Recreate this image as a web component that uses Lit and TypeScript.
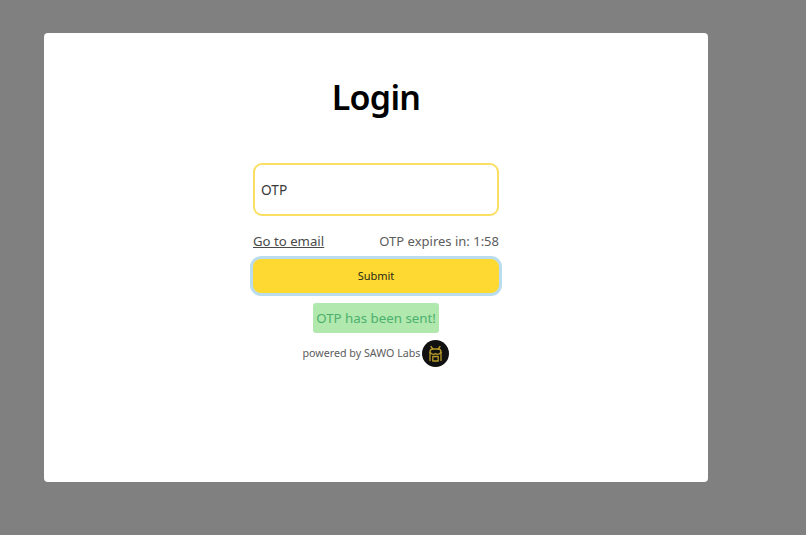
import { LitElement, html, css } from "lit";
import { customElement } from "lit/decorators.js";

@customElement("app-root")
export class AppRoot extends LitElement {
  static styles = css`
    :host {
      display: block;
      width: 806px;
      height: 535px;
      background: #808080;
      overflow: hidden;
      font-family: "Noto Sans", "Open Sans", sans-serif;
      padding: 33px 98px 53px 44px;
      box-sizing: border-box;
    }
    .card {
      background: #fff;
      border-radius: 4px;
      height: 449px;
      display: flex;
      flex-direction: column;
      align-items: center;
      box-sizing: border-box;
      padding-top: 40px;
    }
    h1 {
      margin: 0;
      font-size: 34px;
      line-height: 48px;
      font-weight: 600;
      letter-spacing: -0.7px;
      color: #000;
    }
    .form {
      width: 246px;
      margin-top: 42px;
      display: flex;
      flex-direction: column;
      align-items: center;
    }
    .input {
      width: 100%;
      height: 53px;
      box-sizing: border-box;
      border: 2.75px solid #fbdf62;
      border-radius: 9px;
      display: flex;
      align-items: center;
      padding-left: 6px;
      font-size: 13.7px;
      color: #3a3a3a;
    }
    .meta {
      width: 100%;
      display: flex;
      justify-content: space-between;
      align-items: center;
      margin-top: 15px;
      height: 20px;
      font-size: 13px;
      line-height: 20px;
      color: #5c5c5c;
    }
    .meta a {
      color: #4a4a4a;
      font-size: 13.2px;
      text-decoration: underline;
    }
    .submit {
      width: 100%;
      height: 34px;
      margin-top: 8px;
      box-sizing: border-box;
      border: none;
      border-radius: 8px;
      background: #fed931;
      box-shadow: 0 0 0 3px #b9dcee;
      color: #2a2a1a;
      font-family: inherit;
      font-size: 11px;
      line-height: 32px;
      padding: 0 0 1px;
    }
    .toast {
      margin-top: 10px;
      width: 126px;
      height: 30px;
      border-radius: 3px;
      background: #b0e8ae;
      color: #4cb06c;
      font-size: 13.3px;
      display: flex;
      align-items: center;
      justify-content: center;
      white-space: nowrap;
    }
    .powered {
      margin-top: 7px;
      display: flex;
      align-items: center;
      gap: 2px;
      font-size: 10.7px;
      line-height: 13px;
      color: #5c5c5c;
    }
    .logo {
      width: 27px;
      height: 27px;
      display: block;
    }
  `;

  render() {
    return html`
      <div class="card">
        <h1>Login</h1>
        <div class="form">
          <div class="input">OTP</div>
          <div class="meta">
            <a>Go to email</a>
            <span>OTP expires in: 1:58</span>
          </div>
          <button class="submit">Submit</button>
          <div class="toast">OTP has been sent!</div>
          <div class="powered">
            <span>powered by SAWO Labs</span>
            <svg class="logo" viewBox="0 0 27 27" fill="none">
              <circle cx="13.5" cy="13.5" r="13.5" fill="#111"></circle>
              <g stroke="#b89c2a" stroke-width="1.3" stroke-linecap="round" stroke-linejoin="round">
                <path d="M9 6.500l1.800 2.500M18 6.500l-1.800 2.500"></path>
                <path d="M8 20.500v-8.500a3 3 0 0 1 3-3h5a3 3 0 0 1 3 3v8.500"></path>
                <path d="M8 12.500c2.500 2.500 4 2.500 5.500 1 1.500 1.500 3 1.500 5.500 -1"></path>
                <path d="M10.800 16.500h5.400v4.500h-5.400z"></path>
              </g>
            </svg>
          </div>
        </div>
      </div>
    `;
  }
}
